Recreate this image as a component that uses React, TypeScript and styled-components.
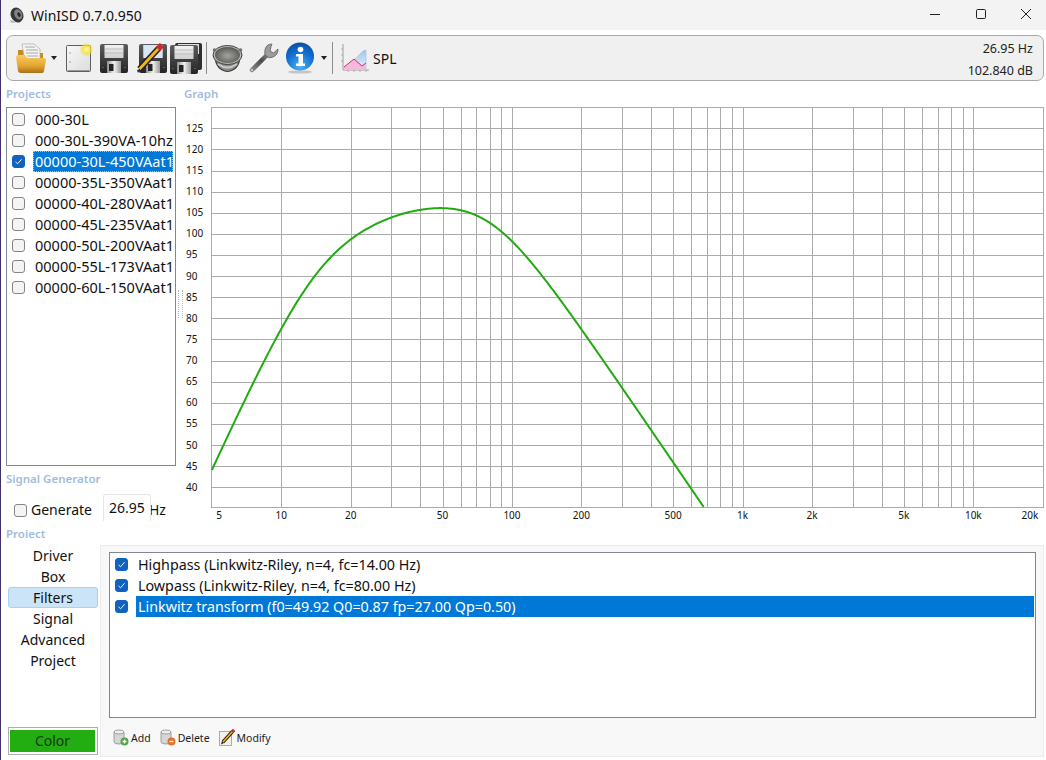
import * as React from 'react';
import styled, { createGlobalStyle } from 'styled-components';

const GlobalStyle = createGlobalStyle`
  html, body {
    margin: 0;
    padding: 0;
    background: #ffffff;
    overflow: hidden;
  }
  body {
    font-family: "Noto Sans", "Open Sans", sans-serif;
    font-size: 14px;
    color: #101010;
  }
`;

const Window = styled.div`
  width: 1046px;
  height: 760px;
  box-sizing: border-box;
  border-left: 1px solid #3f2f6b;
  display: flex;
  flex-direction: column;
  background: #ffffff;
  overflow: hidden;
`;

const TitleBar = styled.div`
  height: 30px;
  flex: none;
  display: flex;
  align-items: center;
  background: #f3f3f3;
  padding-left: 8px;
`;

const TitleText = styled.span`
  margin-left: 6px;
  font-size: 14px;
  flex: 1;
`;

const WindowControl = styled.div`
  width: 45.5px;
  height: 30px;
  box-sizing: border-box;
  padding: 0 14px 2px 0;
  display: flex;
  align-items: center;
  justify-content: flex-end;
`;

const Toolbar = styled.div`
  flex: none;
  height: 46px;
  box-sizing: border-box;
  margin: 5px 2px 0 5px;
  padding: 0 10px 0 8px;
  display: flex;
  align-items: center;
  background: #f0f0f0;
  border: 1px solid #a9a9a9;
  border-radius: 7px;
`;

const ToolIcon = styled.div<{ $w: number; $gap?: number }>`
  width: ${(p) => p.$w}px;
  margin-left: ${(p) => p.$gap ?? 0}px;
  flex: none;
  display: flex;
  justify-content: center;
`;

const DropArrow = styled.div<{ $gap: number }>`
  margin-left: ${(p) => p.$gap}px;
  flex: none;
  width: 0;
  height: 0;
  border-left: 3.5px solid transparent;
  border-right: 3.5px solid transparent;
  border-top: 4px solid #222222;
`;

const ToolSep = styled.div<{ $gap: number }>`
  margin-left: ${(p) => p.$gap}px;
  width: 1px;
  height: 32px;
  flex: none;
  background: #8c8c8c;
`;

const ToolLabel = styled.span`
  margin-left: 3px;
  font-size: 14px;
  flex: none;
`;

const Readout = styled.div`
  margin-left: auto;
  padding-top: 2px;
  display: flex;
  flex-direction: column;
  align-items: flex-end;
  gap: 5px;
  font-size: 12.5px;
  line-height: 17px;
  color: #222222;
`;

const Workspace = styled.div`
  flex: none;
  height: 445px;
  margin-left: 5px;
  display: grid;
  grid-template-columns: 171px 7px 1fr;
`;

const LeftColumn = styled.div`
  display: flex;
  flex-direction: column;
  min-width: 0;
`;

const GroupLabel = styled.div<{ $top?: number; $clip?: boolean }>`
  margin-top: ${(p) => p.$top ?? 0}px;
  height: ${(p) => (p.$clip ? 11 : 13)}px;
  line-height: 13px;
  font-size: 11.5px;
  font-weight: 600;
  color: #9fbcdc;
  overflow: ${(p) => (p.$clip ? 'hidden' : 'visible')};
  flex: none;
`;

const ProjectList = styled.div`
  height: 359px;
  box-sizing: border-box;
  margin-top: 7px;
  width: 170px;
  border: 1px solid #828790;
  padding: 1px 2px 0 5px;
  overflow: hidden;
  flex: none;
`;

const ProjectRow = styled.div`
  height: 21px;
  display: flex;
  align-items: center;
`;

const Check = styled.span<{ $on?: boolean }>`
  width: 13px;
  height: 13px;
  flex: none;
  box-sizing: border-box;
  border-radius: 3px;
  border: 1px solid ${(p) => (p.$on ? '#0f62bd' : '#858585')};
  background: ${(p) => (p.$on ? '#0f62bd' : '#f4f4f4')};
  display: flex;
  align-items: center;
  justify-content: center;
`;

const GenerateCheck = styled(Check)`
  margin-bottom: 4px;
`;

const ProjectName = styled.span<{ $sel?: boolean }>`
  margin-left: 8px;
  padding-left: 2px;
  height: 21px;
  line-height: 20px;
  flex: 1;
  min-width: 0;
  box-sizing: border-box;
  font-size: 14.5px;
  white-space: nowrap;
  overflow: hidden;
  color: ${(p) => (p.$sel ? '#ffffff' : '#101010')};
  background: ${(p) => (p.$sel ? '#0078d7' : 'transparent')};
  outline: ${(p) => (p.$sel ? '1px dotted #9cc8ee' : 'none')};
  outline-offset: -1px;
`;

const GeneratorRow = styled.div`
  height: 27px;
  margin-top: 9px;
  padding-left: 8px;
  display: flex;
  align-items: flex-end;
  overflow: hidden;
  flex: none;
`;

const GenerateLabel = styled.span`
  margin-left: 4px;
  padding-bottom: 1px;
  font-size: 14px;
  width: 68px;
  line-height: 20px;
`;

const FreqInput = styled.div`
  position: relative;
  z-index: 1;
  width: 48px;
  height: 27px;
  box-sizing: border-box;
  border: 1px solid #e6e6e6;
  border-bottom: none;
  border-radius: 3px 3px 0 0;
  background: #ffffff;
  text-align: center;
  font-size: 14px;
  line-height: 25px;
  margin-left: 4px;
`;

const HzLabel = styled.span`
  margin-left: -2px;
  padding-bottom: 1px;
  font-size: 14px;
  line-height: 20px;
`;

const Splitter = styled.div`
  display: flex;
  align-items: center;
  justify-content: flex-start;
`;

const SplitterDots = styled.div`
  width: 3px;
  height: 28px;
  margin-left: 1px;
  border-left: 1px dotted #b5b5b5;
  border-right: 1px dotted #b5b5b5;
`;

const GraphColumn = styled.div`
  display: flex;
  flex-direction: column;
  min-width: 0;
`;

const PlotSvg = styled.svg`
  display: block;
  margin-top: 7px;
  flex: none;
`;

const ChartText = styled.text`
  font-family: "Noto Sans", "Open Sans", sans-serif;
  font-size: 10px;
  fill: #111111;
`;

const ProjectLabelRow = styled.div`
  margin-left: 5px;
  flex: none;
`;

const Bottom = styled.div`
  flex: none;
  height: 212px;
  margin-top: 7px;
  margin-left: 7px;
  margin-right: 2px;
  display: grid;
  grid-template-columns: 90px 1fr;
  column-gap: 2px;
`;

const NavColumn = styled.div`
  display: flex;
  flex-direction: column;
  padding-bottom: 2px;
`;

const NavItem = styled.div<{ $active?: boolean }>`
  height: 21px;
  box-sizing: border-box;
  line-height: 20px;
  text-align: center;
  font-size: 14px;
  border-radius: 3px;
  border: 1px solid ${(p) => (p.$active ? '#a6d2f3' : 'transparent')};
  background: ${(p) => (p.$active ? '#cce4f7' : 'transparent')};
`;

const ColorButton = styled.div`
  margin-top: auto;
  height: 28px;
  box-sizing: border-box;
  border: 1px solid #adadad;
  padding: 2px 2px 2px 1px;
  background: #ffffff;
`;

const ColorFill = styled.div`
  height: 100%;
  background: #22ad10;
  color: #123a12;
  text-align: center;
  font-size: 14px;
  line-height: 21px;
`;

const Panel = styled.div`
  box-sizing: border-box;
  background: #f8f8f8;
  border: 1px solid #ececec;
  padding: 6px 7px 0 8px;
  display: flex;
  flex-direction: column;
`;

const FilterList = styled.div`
  height: 166px;
  box-sizing: border-box;
  flex: none;
  background: #ffffff;
  border: 1px solid #85858f;
  padding: 1px 1px 0 5px;
`;

const FilterRow = styled.div`
  height: 21px;
  display: flex;
  align-items: center;
`;

const FilterText = styled.span<{ $sel?: boolean }>`
  margin-left: 8px;
  padding-left: 2px;
  flex: 1;
  height: 21px;
  line-height: 21px;
  font-size: 14.3px;
  white-space: nowrap;
  color: ${(p) => (p.$sel ? '#ffffff' : '#101010')};
  background: ${(p) => (p.$sel ? '#0078d7' : 'transparent')};
`;

const ActionBar = styled.div`
  flex: 1;
  display: flex;
  align-items: center;
  padding: 1px 0 0 4px;
  gap: 9px;
`;

const ActionButton = styled.div`
  display: flex;
  align-items: center;
  gap: 2px;
  font-size: 10.5px;
  color: #1c1c1c;
`;

/* icons */

const AppIcon = () => (
  <svg width="16" height="16" viewBox="0 0 16 16">
    <g transform="rotate(-25 8 8)">
      <ellipse cx="8" cy="8" rx="6.2" ry="7.6" fill="#34373a" />
      <ellipse cx="9.4" cy="8" rx="3.8" ry="5.4" fill="#7f8488" />
      <ellipse cx="10" cy="8.5" rx="1.6" ry="2.4" fill="#26292c" />
    </g>
    <path d="M1 13 L7 15.5 L2 15.5 Z" fill="#a5a5a5" />
  </svg>
);

const MinimizeIcon = () => (
  <svg width="12" height="12" viewBox="0 0 12 12">
    <line x1="1" y1="6.5" x2="11" y2="6.5" stroke="#222" strokeWidth="1" />
  </svg>
);

const MaximizeIcon = () => (
  <svg width="12" height="12" viewBox="0 0 12 12">
    <rect x="1.5" y="1.5" width="9" height="9" rx="1.2" fill="none" stroke="#222" strokeWidth="1" />
  </svg>
);

const CloseIcon = () => (
  <svg width="12" height="12" viewBox="0 0 12 12">
    <path d="M1 1 L11 11 M11 1 L1 11" stroke="#222" strokeWidth="1" />
  </svg>
);

const FolderIcon = () => (
  <svg width="32" height="31" viewBox="0 0 32 31">
    <defs>
      <linearGradient id="folderFront" x1="0" y1="0" x2="0" y2="1">
        <stop offset="0" stopColor="#f6cd62" />
        <stop offset="0.6" stopColor="#e3a52e" />
        <stop offset="1" stopColor="#a9701a" />
      </linearGradient>
    </defs>
    <path d="M3 7 H10 L12 10 H28 V16 H3 Z" fill="#c68a22" />
    <path d="M7 1 H19 L25 6 V20 H10 Z" fill="#f4f4f4" stroke="#a8a8a8" strokeWidth="0.7" />
    <path d="M10 4 H20 M11 7 H23 M11 10 H23 M12 13 H23" stroke="#a0a0a0" strokeWidth="0.9" />
    <path d="M1 14 Q1 12 3 12 H10 L12 15 H29 Q31 15 31 17 L29 28 Q29 30 27 30 H6 Q3.5 30 3 28 Z" fill="url(#folderFront)" />
  </svg>
);

const NewDocIcon = () => (
  <svg width="27" height="30" viewBox="0 0 27 30">
    <defs>
      <linearGradient id="docFill" x1="0" y1="0" x2="1" y2="1">
        <stop offset="0" stopColor="#f8f8f8" />
        <stop offset="1" stopColor="#dcdcdc" />
      </linearGradient>
      <radialGradient id="docStar">
        <stop offset="0" stopColor="#fffde0" />
        <stop offset="0.45" stopColor="#fbe84a" />
        <stop offset="1" stopColor="#f5d820" stopOpacity="0.25" />
      </radialGradient>
    </defs>
    <rect x="0.5" y="2.5" width="24" height="26" rx="1" fill="url(#docFill)" stroke="#5e5e5e" />
    <rect x="1.5" y="27" width="22" height="1" fill="#9a9a9a" />
    <circle cx="4" cy="10" r="0.8" fill="#9a9a9a" />
    <circle cx="4" cy="19" r="0.8" fill="#9a9a9a" />
    <circle cx="20.5" cy="6.5" r="6.5" fill="url(#docStar)" />
  </svg>
);

const Floppy = ({ id }: { id: string }) => (
  <>
    <defs>
      <linearGradient id={`${id}Body`} x1="0" y1="0" x2="0" y2="1">
        <stop offset="0" stopColor="#5c5c5c" />
        <stop offset="1" stopColor="#242424" />
      </linearGradient>
      <linearGradient id={`${id}Label`} x1="0" y1="0" x2="0" y2="1">
        <stop offset="0" stopColor="#f3f3f3" />
        <stop offset="1" stopColor="#cfcfcf" />
      </linearGradient>
      <linearGradient id={`${id}Metal`} x1="0" y1="0" x2="1" y2="0">
        <stop offset="0" stopColor="#8c8c8c" />
        <stop offset="0.5" stopColor="#f2f2f2" />
        <stop offset="1" stopColor="#9a9a9a" />
      </linearGradient>
    </defs>
    <rect x="0" y="0" width="28" height="29" rx="2" fill={`url(#${id}Body)`} />
    <rect x="4.5" y="1" width="19" height="13" fill={`url(#${id}Label)`} />
    <path d="M5 5 H23 M5 9 H23" stroke="#b4b4b4" strokeWidth="0.8" />
    <rect x="7" y="17" width="14" height="12" fill={`url(#${id}Metal)`} />
    <rect x="9" y="20" width="4.5" height="7" fill="#242424" />
    <rect x="24.5" y="23" width="1" height="1" fill="#8a8a8a" />
    <rect x="2.5" y="23" width="1" height="1" fill="#8a8a8a" />
  </>
);

const SaveIcon = () => (
  <svg width="28" height="29" viewBox="0 0 28 29">
    <Floppy id="save" />
  </svg>
);

const SaveAsIcon = () => (
  <svg width="32" height="30" viewBox="0 0 32 30">
    <g transform="translate(4 1)">
      <Floppy id="saveAs" />
    </g>
    <rect x="8.5" y="2" width="19" height="13" fill="#d7e5f6" />
    <path d="M3 30 L2 27 L6 26 Z" fill="#2a2a2a" />
    <line x1="4.5" y1="26" x2="24" y2="5" stroke="#241d0c" strokeWidth="6" />
    <line x1="4.5" y1="26" x2="24" y2="5" stroke="#f0b41c" strokeWidth="3" />
    <line x1="23" y1="6" x2="27" y2="2" stroke="#cc2b2b" strokeWidth="6" />
  </svg>
);

const SaveAllIcon = () => (
  <svg width="32" height="31" viewBox="0 0 32 31">
    <rect x="5" y="0" width="27" height="27" rx="2" fill="#2f2f2f" />
    <rect x="8" y="1" width="21" height="10" fill="#e2e2e2" />
    <g transform="translate(0 2)">
      <Floppy id="saveAll" />
    </g>
  </svg>
);

const SpeakerIcon = () => (
  <svg width="31" height="29" viewBox="0 0 31 29">
    <defs>
      <radialGradient id="spkCone" cx="0.5" cy="0.55" r="0.6">
        <stop offset="0" stopColor="#a3a39f" />
        <stop offset="0.7" stopColor="#6b6b68" />
        <stop offset="1" stopColor="#4a4a48" />
      </radialGradient>
    </defs>
    <path d="M3 13 Q4 26 15.5 27.5 Q27 26 28 13 Z" fill="#8c8c88" stroke="#3a3a3a" strokeWidth="1.2" />
    <path d="M6 20 Q15.5 27 25 20" fill="none" stroke="#c8c8c6" strokeWidth="2" />
    <ellipse cx="15.5" cy="11" rx="14.5" ry="9.5" fill="#b9b9b6" stroke="#3f3f3f" strokeWidth="1" />
    <ellipse cx="15.5" cy="11" rx="12.5" ry="8" fill="url(#spkCone)" />
    <circle cx="2.5" cy="6" r="1.8" fill="#6f6f6f" />
    <circle cx="28.5" cy="6" r="1.8" fill="#6f6f6f" />
  </svg>
);

const WrenchIcon = () => (
  <svg width="31" height="31" viewBox="0 0 31 31">
    <defs>
      <linearGradient id="wrenchShaft" x1="0" y1="1" x2="1" y2="0">
        <stop offset="0" stopColor="#8a8a8a" />
        <stop offset="0.6" stopColor="#4a4a4a" />
        <stop offset="1" stopColor="#8c8c8c" />
      </linearGradient>
    </defs>
    <line x1="4" y1="27" x2="20" y2="11" stroke="url(#wrenchShaft)" strokeWidth="4.5" strokeLinecap="round" />
    <circle cx="4" cy="27" r="1" fill="#dddddd" />
    <path d="M24 1 Q18 1 17 7 Q16 11 18 13 Q21 16 25 14 Q30 12 30 6 L25.5 10 L22 8 L23 3.5 Z" fill="#9c9c9c" stroke="#5a5a5a" strokeWidth="0.8" />
  </svg>
);

const InfoIcon = () => (
  <svg width="30" height="32" viewBox="0 0 30 32">
    <defs>
      <radialGradient id="infoBall" cx="0.5" cy="0.85" r="0.85">
        <stop offset="0" stopColor="#4fb2f4" />
        <stop offset="0.6" stopColor="#0f6fd0" />
        <stop offset="1" stopColor="#0a4ea8" />
      </radialGradient>
    </defs>
    <ellipse cx="15" cy="30" rx="12" ry="1.6" fill="#c4c4c4" />
    <circle cx="15" cy="14.5" r="14" fill="url(#infoBall)" />
    <circle cx="15.5" cy="7.5" r="2.8" fill="#ffffff" />
    <path d="M11 12 H18 V21.5 H20 V24 H11 V21.5 H13.5 V14.5 H11 Z" fill="#ffffff" />
  </svg>
);

const SplIcon = () => (
  <svg width="30" height="30" viewBox="0 0 30 30">
    <defs>
      <linearGradient id="splBlue" x1="0" y1="0" x2="0" y2="1">
        <stop offset="0" stopColor="#9fc3ee" />
        <stop offset="1" stopColor="#e6f0fb" />
      </linearGradient>
    </defs>
    <path d="M3 1 V27 H29" fill="none" stroke="#8a8a8a" strokeWidth="0.8" />
    <path d="M1 6 H3 M1 12 H3 M1 18 H3 M8 27 V29 M14 27 V29 M20 27 V29 M26 27 V29" stroke="#9a9a9a" strokeWidth="0.7" />
    <path d="M14 17 L20 11 Q23 7 26 7 V26 H18 Z" fill="url(#splBlue)" stroke="#a9c6ea" strokeWidth="0.7" />
    <path d="M4 27 V24 L14 16 L22 23 L26 20 V27 Z" fill="#f7b6de" />
    <path d="M4 24 L14 16 L22 23 L26 20" fill="none" stroke="#c3326f" strokeWidth="1" />
  </svg>
);

const Tick = () => (
  <svg width="9" height="9" viewBox="0 0 9 9">
    <path d="M1.5 4.8 L3.6 6.8 L7.6 2.2" fill="none" stroke="#e8f2ff" strokeWidth="1" />
  </svg>
);

const DbIcon = ({ badge }: { badge: 'add' | 'delete' }) => (
  <svg width="16" height="17" viewBox="0 0 16 17">
    <path d="M1 3 V13 Q1 15 6 15 Q11 15 11 13 V3 Z" fill="#d6d6d6" stroke="#8c8c8c" strokeWidth="0.8" />
    <ellipse cx="6" cy="3" rx="5" ry="2" fill="#efefef" stroke="#8c8c8c" strokeWidth="0.8" />
    <circle cx="11.5" cy="12.5" r="4" fill={badge === 'add' ? '#4fa64a' : '#e4702a'} />
    <path d={badge === 'add' ? 'M9.5 12.5 H13.5 M11.5 10.5 V14.5' : 'M9.5 12.5 H13.5'} stroke="#ffffff" strokeWidth="1.3" />
  </svg>
);

const ModifyIcon = () => (
  <svg width="16" height="17" viewBox="0 0 16 17">
    <rect x="0.5" y="2.5" width="12" height="14" fill="#f4f2ec" stroke="#9a9a9a" strokeWidth="0.8" />
    <line x1="4" y1="13" x2="13.5" y2="2.5" stroke="#2a2110" strokeWidth="3.4" />
    <line x1="4" y1="13" x2="13.5" y2="2.5" stroke="#f0b41c" strokeWidth="1.6" />
    <line x1="13.2" y1="2.8" x2="15" y2="0.8" stroke="#c8322b" strokeWidth="3.4" />
    <path d="M2 15.5 L3 12 L5 14 Z" fill="#2a2110" />
  </svg>
);

/* chart */

const PLOT_LEFT = 211;
const PLOT_RIGHT = 1043;
const PLOT_TOP = 107;
const PLOT_BOTTOM = 507;
const ORIGIN_X = 184;

const xOf = (f: number) => 281.3 + 230.67 * Math.log10(f / 10);
const yOf = (db: number) => 487.3 - (db - 40) * 4.224;

const decibels = Array.from({ length: 18 }, (_, i) => 40 + i * 5);
const freqLines = [
  10, 20, 30, 40, 50, 60, 70, 80, 90, 100, 200, 300, 400, 500, 600, 700, 800, 900, 1000, 2000, 3000, 4000, 5000, 6000,
  7000, 8000, 9000, 10000,
];
const freqLabels: [string, number][] = [
  ['5', 219],
  ['10', xOf(10)],
  ['20', xOf(20)],
  ['50', xOf(50)],
  ['100', xOf(100)],
  ['200', xOf(200)],
  ['500', xOf(500)],
  ['1k', xOf(1000)],
  ['2k', xOf(2000)],
  ['5k', xOf(5000)],
  ['10k', xOf(10000)],
  ['20k', 1030],
];

// LT box response plus the two LR4 filters from the list below
const splAt = (f: number) =>
  109.6 -
  20 * Math.log10(1 + (27 / f) ** 2) -
  20 * Math.log10(1 + (14 / f) ** 4) -
  20 * Math.log10(1 + (f / 80) ** 4);

const curvePoints = Array.from({ length: 600 }, (_, i) => 5 * 10 ** (i * 0.004))
  .map((f) => [xOf(f), yOf(splAt(f))])
  .filter(([, y]) => y <= PLOT_BOTTOM)
  .map(([x, y]) => `${(x - ORIGIN_X).toFixed(2)},${(y - PLOT_TOP).toFixed(2)}`)
  .join(' ');

const px = (x: number) => Math.round(x) - ORIGIN_X + 0.5;
const py = (y: number) => Math.round(y) - PLOT_TOP + 0.5;

const SplChart = () => (
  <PlotSvg width="861" height="418" viewBox="0 0 861 418">
    <g stroke="#ababab" strokeWidth="1" shapeRendering="crispEdges">
      <rect
        x={px(PLOT_LEFT)}
        y={py(PLOT_TOP)}
        width={PLOT_RIGHT - PLOT_LEFT}
        height={PLOT_BOTTOM - PLOT_TOP}
        fill="#ffffff"
      />
      {decibels.map((d) => (
        <line key={d} x1={px(PLOT_LEFT)} x2={px(PLOT_RIGHT)} y1={py(yOf(d))} y2={py(yOf(d))} />
      ))}
      {freqLines.map((f) => (
        <line key={f} x1={px(xOf(f))} x2={px(xOf(f))} y1={py(PLOT_TOP)} y2={py(PLOT_BOTTOM)} />
      ))}
    </g>
    <polyline points={curvePoints} fill="none" stroke="#22aa11" strokeWidth="2" strokeLinejoin="round" />
    {decibels.map((d) => (
      <ChartText key={d} x={2} y={yOf(d) - PLOT_TOP + 3.5}>
        {d}
      </ChartText>
    ))}
    {freqLabels.map(([label, x]) => (
      <ChartText key={label} x={x - ORIGIN_X} y={412} textAnchor="middle">
        {label}
      </ChartText>
    ))}
  </PlotSvg>
);

const projects = [
  '000-30L',
  '000-30L-390VA-10hz',
  '00000-30L-450VAat1',
  '00000-35L-350VAat1',
  '00000-40L-280VAat1',
  '00000-45L-235VAat1',
  '00000-50L-200VAat1',
  '00000-55L-173VAat1',
  '00000-60L-150VAat1',
];

const navItems = ['Driver', 'Box', 'Filters', 'Signal', 'Advanced', 'Project'];

const filters = [
  'Highpass (Linkwitz-Riley, n=4, fc=14.00 Hz)',
  'Lowpass (Linkwitz-Riley, n=4, fc=80.00 Hz)',
  'Linkwitz transform (f0=49.92 Q0=0.87 fp=27.00 Qp=0.50)',
];

export default function App() {
  return (
    <Window>
      <GlobalStyle />
      <TitleBar>
        <AppIcon />
        <TitleText>WinISD 0.7.0.950</TitleText>
        <WindowControl>
          <MinimizeIcon />
        </WindowControl>
        <WindowControl>
          <MaximizeIcon />
        </WindowControl>
        <WindowControl>
          <CloseIcon />
        </WindowControl>
      </TitleBar>
      <Toolbar>
        <ToolIcon $w={32}>
          <FolderIcon />
        </ToolIcon>
        <DropArrow $gap={4} />
        <ToolIcon $w={27} $gap={9}>
          <NewDocIcon />
        </ToolIcon>
        <ToolIcon $w={28} $gap={7}>
          <SaveIcon />
        </ToolIcon>
        <ToolIcon $w={32} $gap={7}>
          <SaveAsIcon />
        </ToolIcon>
        <ToolIcon $w={32} $gap={3}>
          <SaveAllIcon />
        </ToolIcon>
        <ToolSep $gap={4} />
        <ToolIcon $w={31} $gap={5}>
          <SpeakerIcon />
        </ToolIcon>
        <ToolIcon $w={31} $gap={5}>
          <WrenchIcon />
        </ToolIcon>
        <ToolIcon $w={30} $gap={6}>
          <InfoIcon />
        </ToolIcon>
        <DropArrow $gap={6} />
        <ToolSep $gap={5} />
        <ToolIcon $w={30} $gap={7}>
          <SplIcon />
        </ToolIcon>
        <ToolLabel>SPL</ToolLabel>
        <Readout>
          <span>26.95 Hz</span>
          <span>102.840 dB</span>
        </Readout>
      </Toolbar>
      <Workspace>
        <LeftColumn>
          <GroupLabel $top={6}>Projects</GroupLabel>
          <ProjectList>
            {projects.map((name, i) => (
              <ProjectRow key={name}>
                <Check $on={i === 2}>{i === 2 && <Tick />}</Check>
                <ProjectName $sel={i === 2}>{name}</ProjectName>
              </ProjectRow>
            ))}
          </ProjectList>
          <GroupLabel $top={6}>Signal Generator</GroupLabel>
          <GeneratorRow>
            <GenerateCheck />
            <GenerateLabel>Generate</GenerateLabel>
            <FreqInput>26.95</FreqInput>
            <HzLabel>Hz</HzLabel>
          </GeneratorRow>
        </LeftColumn>
        <Splitter>
          <SplitterDots />
        </Splitter>
        <GraphColumn>
          <GroupLabel $top={6}>Graph</GroupLabel>
          <SplChart />
        </GraphColumn>
      </Workspace>
      <ProjectLabelRow>
        <GroupLabel $top={1} $clip>
          Project
        </GroupLabel>
      </ProjectLabelRow>
      <Bottom>
        <NavColumn>
          {navItems.map((item) => (
            <NavItem key={item} $active={item === 'Filters'}>
              {item}
            </NavItem>
          ))}
          <ColorButton>
            <ColorFill>Color</ColorFill>
          </ColorButton>
        </NavColumn>
        <Panel>
          <FilterList>
            {filters.map((text, i) => (
              <FilterRow key={text}>
                <Check $on>
                  <Tick />
                </Check>
                <FilterText $sel={i === 2}>{text}</FilterText>
              </FilterRow>
            ))}
          </FilterList>
          <ActionBar>
            <ActionButton>
              <DbIcon badge="add" />
              Add
            </ActionButton>
            <ActionButton>
              <DbIcon badge="delete" />
              Delete
            </ActionButton>
            <ActionButton>
              <ModifyIcon />
              Modify
            </ActionButton>
          </ActionBar>
        </Panel>
      </Bottom>
    </Window>
  );
}
